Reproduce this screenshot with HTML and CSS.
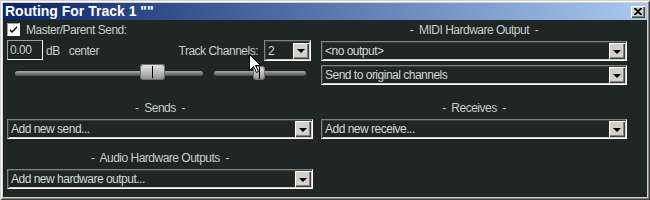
FILE: index.html
```html
<!DOCTYPE html>
<html>
<head>
<meta charset="utf-8">
<title>Routing For Track 1</title>
<link rel="stylesheet" href="styles.css">
</head>
<body>
<div class="window">
  <div class="titlebar">
    <span class="title">Routing For Track 1 ""</span>
    <span class="close"><svg width="8" height="7" viewBox="0 0 8 7"><path d="M0 0h2l2 2 2-2h2v1L5 3.5 8 6v1H6L4 5 2 7H0V6l3-2.5L0 1z" fill="#000"/></svg></span>
  </div>
  <div class="client">
    <div class="section master">
      <div class="check-row">
        <span class="checkbox"><svg width="11" height="11" viewBox="0 0 11 11"><path d="M2 5l2 2 5-5v2l-5 5-2-2z" fill="#000"/></svg></span>
        <span>Master/Parent Send:</span>
      </div>
      <div class="vol-row">
        <span class="edit">0.00</span>
        <span class="db">dB</span>
        <span class="pan">center</span>
        <span class="tc">Track Channels:</span>
        <div class="combo small"><span class="combo-text">2</span><span class="btn"><span class="tri"></span></span></div>
      </div>
      <div class="slider-row">
        <div class="track vol-track"><span class="thumb big" style="left:125px"><span class="mark"></span></span></div>
        <div class="track pan-track"><span class="thumb little" style="left:39px"><span class="mark"></span></span></div>
      </div>
    </div>
    <div class="section midi">
      <div class="label">-&nbsp; MIDI Hardware Output &nbsp;-</div>
      <div class="combo"><span class="combo-text">&lt;no output&gt;</span><span class="btn"><span class="tri"></span></span></div>
      <div class="combo"><span class="combo-text">Send to original channels</span><span class="btn"><span class="tri"></span></span></div>
    </div>
    <div class="section row2">
      <div class="label">-&nbsp; Sends &nbsp;-</div>
      <div class="combo"><span class="combo-text">Add new send...</span><span class="btn"><span class="tri"></span></span></div>
    </div>
    <div class="section row2">
      <div class="label">-&nbsp; Receives &nbsp;-</div>
      <div class="combo"><span class="combo-text">Add new receive...</span><span class="btn"><span class="tri"></span></span></div>
    </div>
    <div class="section row3">
      <div class="label">-&nbsp; Audio Hardware Outputs &nbsp;-</div>
      <div class="combo"><span class="combo-text">Add new hardware output...</span><span class="btn"><span class="tri"></span></span></div>
    </div>
  </div>
  <svg class="cursor" width="13" height="20" viewBox="0 0 13 20"><path d="M0.5 0.5V16.5L4.5 12.5L7.5 18.5L9.5 17.5L6.5 11.5H11.5Z" fill="#fff" stroke="#000" stroke-width="1"/></svg>
</div>
</body>
</html>
```
FILE: styles.css
```css
* { box-sizing: border-box; }
body { margin: 0; background: #1f2623; }

.window {
  position: relative;
  width: 650px;
  height: 200px;
  padding: 3px;
  background: #d4d0c8;
  box-shadow: inset 1px 1px 0 #d4d0c8, inset -1px -1px 0 #404040, inset 2px 2px 0 #ffffff, inset -2px -2px 0 #808080;
  display: flex;
  flex-direction: column;
  font-family: "Liberation Sans", Arial, sans-serif;
  font-size: 12px;
  letter-spacing: -0.5px;
  color: #c6cdca;
}

.titlebar {
  height: 17px;
  background: linear-gradient(to right, #0a246a, #a6caf0);
  display: flex;
  align-items: center;
  padding: 0 2px 0 2px;
}
.title {
  flex: 1;
  color: #fff;
  font-family: "Liberation Sans Narrow", "Liberation Sans", Arial, sans-serif;
  font-weight: bold;
  font-size: 14px;
  letter-spacing: 0;
  line-height: 17px;
}
.close {
  width: 14px;
  height: 12px;
  background: #d4d0c8;
  box-shadow: inset 1px 1px 0 #fff, inset -1px -1px 0 #404040, inset -2px -2px 0 #808080;
  display: flex;
  align-items: center;
  justify-content: center;
}

.client {
  flex: 1;
  background: #1f2623;
  padding: 3px 4px 0 4px;
  display: grid;
  grid-template-columns: 306px 306px;
  column-gap: 8px;
  align-content: start;
}

.section { display: flex; flex-direction: column; gap: 4px; }
.master { gap: 0; }
.row2 { margin-top: 16px; }
.row3 { margin-top: 12px; }

.label {
  height: 14px;
  line-height: 14px;
  text-align: center;
  white-space: pre;
}

.combo {
  height: 20px;
  border: 1px solid;
  border-color: #808080 #ffffff #ffffff #808080;
  box-shadow: inset 1px 1px 0 #404040, inset -1px -1px 0 #d4d0c8;
  padding: 1px;
  display: flex;
  align-items: center;
}
.combo-text {
  flex: 1;
  padding-left: 2px;
  color: #d4dad7;
  white-space: nowrap;
}
.btn {
  width: 16px;
  height: 16px;
  background: #d4d0c8;
  box-shadow: inset 1px 1px 0 #ffffff, inset -1px -1px 0 #404040, inset -2px -2px 0 #808080;
  display: flex;
  align-items: center;
  justify-content: center;
}
.tri {
  width: 0;
  height: 0;
  border-left: 4px solid transparent;
  border-right: 4px solid transparent;
  border-top: 4px solid #000;
  margin-top: 1px;
}

.check-row {
  height: 13px;
  display: flex;
  align-items: center;
  gap: 6px;
}
.checkbox {
  width: 13px;
  height: 13px;
  background: #fff;
  border: 1px solid;
  border-color: #a0a0a0 #ffffff #ffffff #a0a0a0;
  display: flex;
}

.vol-row {
  margin-top: 4px;
  height: 21px;
  display: flex;
  align-items: center;
}
.edit {
  width: 36px;
  height: 20px;
  border: 1px solid;
  border-color: #a0a0a0 #ffffff #ffffff #a0a0a0;
  padding-left: 2px;
  line-height: 18px;
  align-self: flex-start;
}
.db { margin-left: 3px; }
.pan { margin-left: 9px; }
.tc { margin-left: auto; margin-right: 6px; }
.combo.small {
  width: 47px;
  height: 21px;
  margin: 0 2px 0 0;
}

.slider-row {
  margin-top: 4px;
  height: 16px;
  display: flex;
  align-items: center;
}
.track {
  position: relative;
  height: 5px;
  border-radius: 3px;
  background: linear-gradient(to bottom, #a8a8a8, #7c7c7c 50%, #4a4a4a);
}
.vol-track { margin-left: 8px; width: 188px; }
.pan-track { margin-left: 11px; width: 92px; }
.thumb {
  position: absolute;
  border-radius: 4px;
  background: linear-gradient(to bottom, #e6e6e6, #c4c4c4 45%, #8c8c8c);
  box-shadow: inset 0 0 0 1px #707070;
  display: flex;
  justify-content: center;
  align-items: center;
}
.thumb.big { width: 25px; height: 16px; top: -7px; }
.thumb.little { width: 12px; height: 14px; top: -5px; }
.mark { width: 1px; height: 12px; background: #000; }

.cursor {
  position: absolute;
  left: 249px;
  top: 54px;
}
```
